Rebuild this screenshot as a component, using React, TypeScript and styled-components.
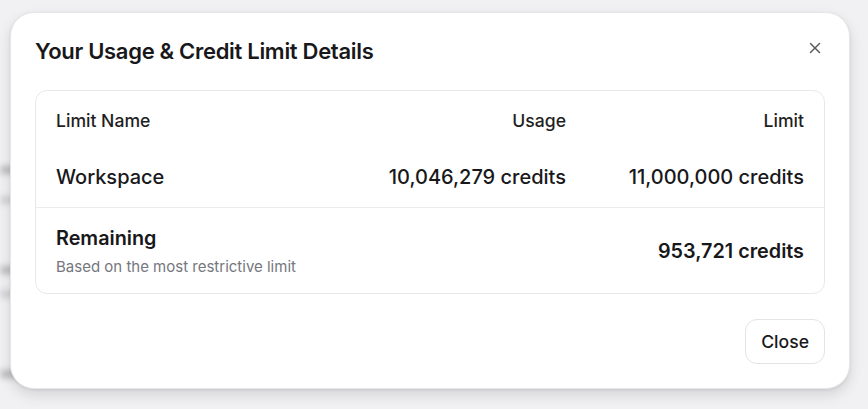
import styled, { createGlobalStyle } from "styled-components";

const GlobalStyle = createGlobalStyle`
  html, body {
    margin: 0;
    padding: 0;
    background: #f1f1f3;
    font-family: Inter, "Noto Sans", sans-serif;
    color: #18181b;
  }
`;

type Row = { name: string; usage: string; limit: string };

const rows: Row[] = [
  { name: "Workspace", usage: "10,046,279 credits", limit: "11,000,000 credits" },
];

export default function App() {
  return (
    <>
      <GlobalStyle />
      <Page>
        <Backdrop>
          <Smudge />
          <Smudge />
          <Smudge />
          <Smudge />
          <Smudge />
        </Backdrop>
        <Dialog>
          <Header>
            <Title>Your Usage &amp; Credit Limit Details</Title>
            <CloseIcon aria-label="Close">
              <svg width="18" height="18" viewBox="0 0 24 24" fill="none" stroke="currentColor" strokeWidth="2" strokeLinecap="round">
                <path d="M18 6 6 18" />
                <path d="m6 6 12 12" />
              </svg>
            </CloseIcon>
          </Header>
          <Card>
            <HeadRow>
              <HeadCell>Limit Name</HeadCell>
              <HeadCell $right>Usage</HeadCell>
              <HeadCell $right>Limit</HeadCell>
            </HeadRow>
            {rows.map((r) => (
              <DataRow key={r.name}>
                <Cell>{r.name}</Cell>
                <Cell $right>{r.usage}</Cell>
                <Cell $right>{r.limit}</Cell>
              </DataRow>
            ))}
            <TotalRow>
              <div>
                <TotalLabel>Remaining</TotalLabel>
                <Hint>Based on the most restrictive limit</Hint>
              </div>
              <TotalValue>953,721 credits</TotalValue>
            </TotalRow>
          </Card>
          <Footer>
            <Button>Close</Button>
          </Footer>
        </Dialog>
      </Page>
    </>
  );
}

const Page = styled.div`
  position: relative;
  width: 868px;
  height: 409px;
  overflow: hidden;
`;

const Backdrop = styled.div`
  display: flex;
  flex-direction: column;
  gap: 22px;
  padding: 166px 0 0 0;
  filter: blur(3px);
`;

const Smudge = styled.div`
  width: 22px;
  height: 8px;
  background: #b8b8bc;
  border-radius: 4px;
  &:nth-child(2) { background: #cfcfd3; }
  &:nth-child(3) { margin-top: 40px; }
  &:nth-child(4) { background: #cfcfd3; margin-top: -6px; }
  &:nth-child(5) { margin-top: 50px; }
`;

const Dialog = styled.div`
  position: absolute;
  left: 10px;
  top: 12px;
  width: 840px;
  height: 377px;
  box-sizing: border-box;
  background: #fff;
  border: 1px solid #e6e6e9;
  border-radius: 24px;
  box-shadow: 0 6px 14px rgba(0, 0, 0, 0.12), 0 1px 3px rgba(0, 0, 0, 0.08);
  padding: 24px;
  display: flex;
  flex-direction: column;
`;

const Header = styled.div`
  display: flex;
  justify-content: space-between;
  align-items: flex-start;
  height: 60px;
`;

const Title = styled.h2`
  margin: 1px 0 0 0;
  font-size: 22px;
  font-weight: 600;
  letter-spacing: -0.3px;
  color: #18181b;
`;

const CloseIcon = styled.button`
  display: flex;
  border: none;
  background: none;
  padding: 0;
  margin: 2px 1px 0 0;
  color: #5a5a60;
`;

const Card = styled.div`
  border: 1px solid #e8e8eb;
  border-radius: 12px;
  padding: 0 20px;
`;

const HeadRow = styled.div`
  display: grid;
  grid-template-columns: 1fr 220px 238px;
  height: 57px;
  padding-top: 1px;
  box-sizing: border-box;
  align-items: center;
`;

const HeadCell = styled.div<{ $right?: boolean }>`
  font-size: 17.6px;
  font-weight: 450;
  color: #1f1f23;
  text-align: ${(p) => (p.$right ? "right" : "left")};
`;

const DataRow = styled.div`
  display: grid;
  grid-template-columns: 1fr 220px 238px;
  height: 58px;
  align-items: center;
  border-bottom: 1px solid #ececef;
  margin: 0 -20px;
  padding: 0 20px 1px;
`;

const Cell = styled.div<{ $right?: boolean }>`
  font-size: 20px;
  font-weight: 450;
  color: #18181b;
  text-align: ${(p) => (p.$right ? "right" : "left")};
`;

const TotalRow = styled.div`
  display: flex;
  justify-content: space-between;
  align-items: center;
  height: 85px;
`;

const TotalLabel = styled.div`
  font-size: 19.8px;
  font-weight: 600;
  color: #18181b;
`;

const Hint = styled.div`
  font-size: 15px;
  color: #76767e;
  margin-top: 7px;
`;

const TotalValue = styled.div`
  font-size: 19.8px;
  font-weight: 600;
  color: #18181b;
`;

const Footer = styled.div`
  display: flex;
  justify-content: flex-end;
  margin-top: 25px;
`;

const Button = styled.button`
  font-family: Inter, "Noto Sans", sans-serif;
  font-size: 17.6px;
  font-weight: 450;
  color: #18181b;
  background: #fff;
  border: 1px solid #e4e4e7;
  border-radius: 12px;
  height: 45px;
  padding: 0 15px;
`;
